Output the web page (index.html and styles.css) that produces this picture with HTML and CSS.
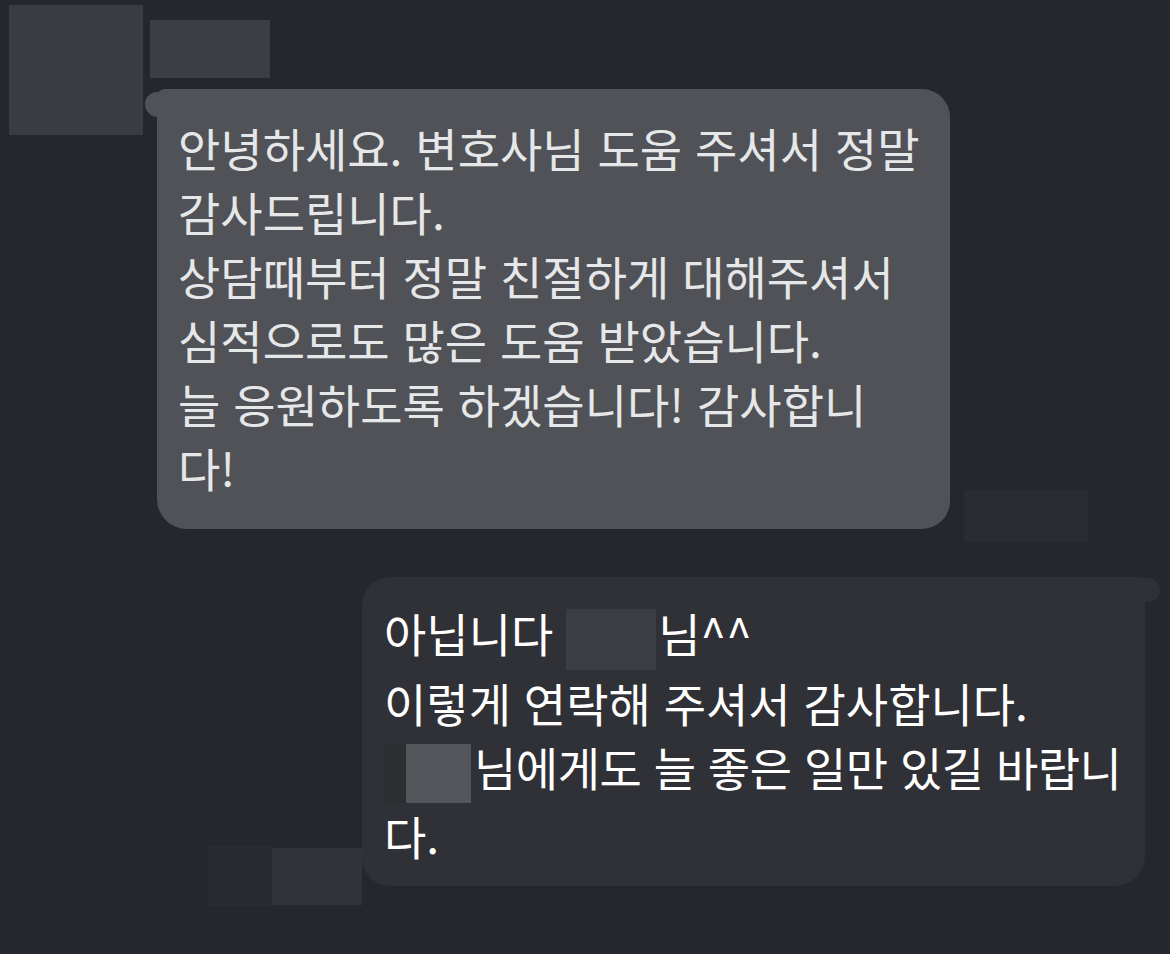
FILE: index.html
```html
<!DOCTYPE html>
<html lang="ko">
  <head>
    <meta charset="utf-8" />
    <title>Chat</title>
    <link rel="stylesheet" href="styles.css">
  </head>
  <body>
    <div class="chat">
      <div class="row in">
        <div class="avatar"></div>
        <div class="col">
          <div class="name"></div>
          <div class="line">
            <div class="bubble left">
              안녕하세요. 변호사님 도움 주셔서 정말<br />
              감사드립니다.<br />
              상담때부터 정말 친절하게 대해주셔서<br />
              심적으로도 많은 도움 받았습니다.<br />
              늘 응원하도록 하겠습니다! 감사합니<br />
              다!
            </div>
            <div class="time time-in"></div>
          </div>
        </div>
      </div>

      <div class="row out">
        <div class="time-out">
          <div class="time-a"></div>
          <div class="time-b"></div>
        </div>
        <div class="bubble right">
          아닙니다<span class="hide hide-1"></span>님^^<br />
          이렇게 연락해 주셔서 감사합니다.<br />
          <span class="hide-pad"></span><span class="hide hide-2"></span><span class="tight">님에게도 늘 좋은 일만 있길 바랍니</span><br />
          다.
        </div>
      </div>
    </div>
  </body>
</html>
```

FILE: styles.css
```css
html,
body {
  margin: 0;
  background-color: #26272c;
}
body {
  width: 1170px;
  height: 954px;
  overflow: hidden;
  font-family: "Noto Sans CJK KR", "Noto Sans", sans-serif;
}
.chat {
  display: flex;
  flex-direction: column;
}
.row {
  display: flex;
}
.in {
  padding-top: 5px;
  padding-left: 9px;
  gap: 7px;
}
.avatar {
  width: 134px;
  height: 130px;
  background-color: #3b3c41;
  flex: none;
}
.col {
  display: flex;
  flex-direction: column;
}
.name {
  width: 120px;
  height: 58px;
  margin-top: 15px;
  background-color: #3d3e43;
}
.line {
  display: flex;
  align-items: flex-end;
  margin-top: 11px;
  margin-left: 7px;
  gap: 14px;
}
.bubble {
  position: relative;
  font-size: 46px;
  line-height: 64px;
  white-space: nowrap;
}
.bubble.left {
  width: 793px;
  box-sizing: border-box;
  padding: 26px 0 30px 21px;
  background-color: #505257;
  color: #e6e7e9;
  border-radius: 8px 28px 28px 30px;
}
.bubble.left::before {
  content: "";
  position: absolute;
  left: -12px;
  top: 3px;
  width: 40px;
  height: 25px;
  background-color: #505257;
  border-radius: 13px 4px 4px 14px;
}
.time-in {
  width: 124px;
  height: 52px;
  margin-bottom: -13px;
  background-color: #2b2c31;
}
.out {
  justify-content: flex-end;
  align-items: flex-end;
  margin-top: 48px;
  padding-right: 25px;
}
.time-out {
  display: flex;
  align-items: flex-end;
  margin-bottom: -20px;
}
.time-a {
  width: 64px;
  height: 60px;
  background-color: #2a2b30;
}
.time-b {
  width: 90px;
  height: 57px;
  margin-bottom: 1px;
  background-color: #323338;
}
.bubble.right {
  width: 783px;
  box-sizing: border-box;
  padding: 23px 0 19px 22px;
  background-color: #2f3136;
  color: #ffffff;
  border-radius: 28px 8px 30px 28px;
}
.bubble.right::before {
  content: "";
  position: absolute;
  right: -15px;
  top: 1px;
  width: 46px;
  height: 24px;
  background-color: #2f3136;
  border-radius: 4px 13px 13px 4px;
}
.hide {
  display: inline-block;
  vertical-align: middle;
}
.hide-1 {
  width: 90px;
  height: 61px;
  margin-left: 13px;
  margin-right: 2px;
  background-color: #3d3e43;
}
.hide-pad {
  display: inline-block;
  vertical-align: middle;
  width: 22px;
  height: 59px;
  background-color: #2c2e32;
}
.hide-2 {
  width: 65px;
  height: 59px;
  margin-right: 3px;
  background-color: #55565b;
}
.tight {
  letter-spacing: -0.5px;
}
```
